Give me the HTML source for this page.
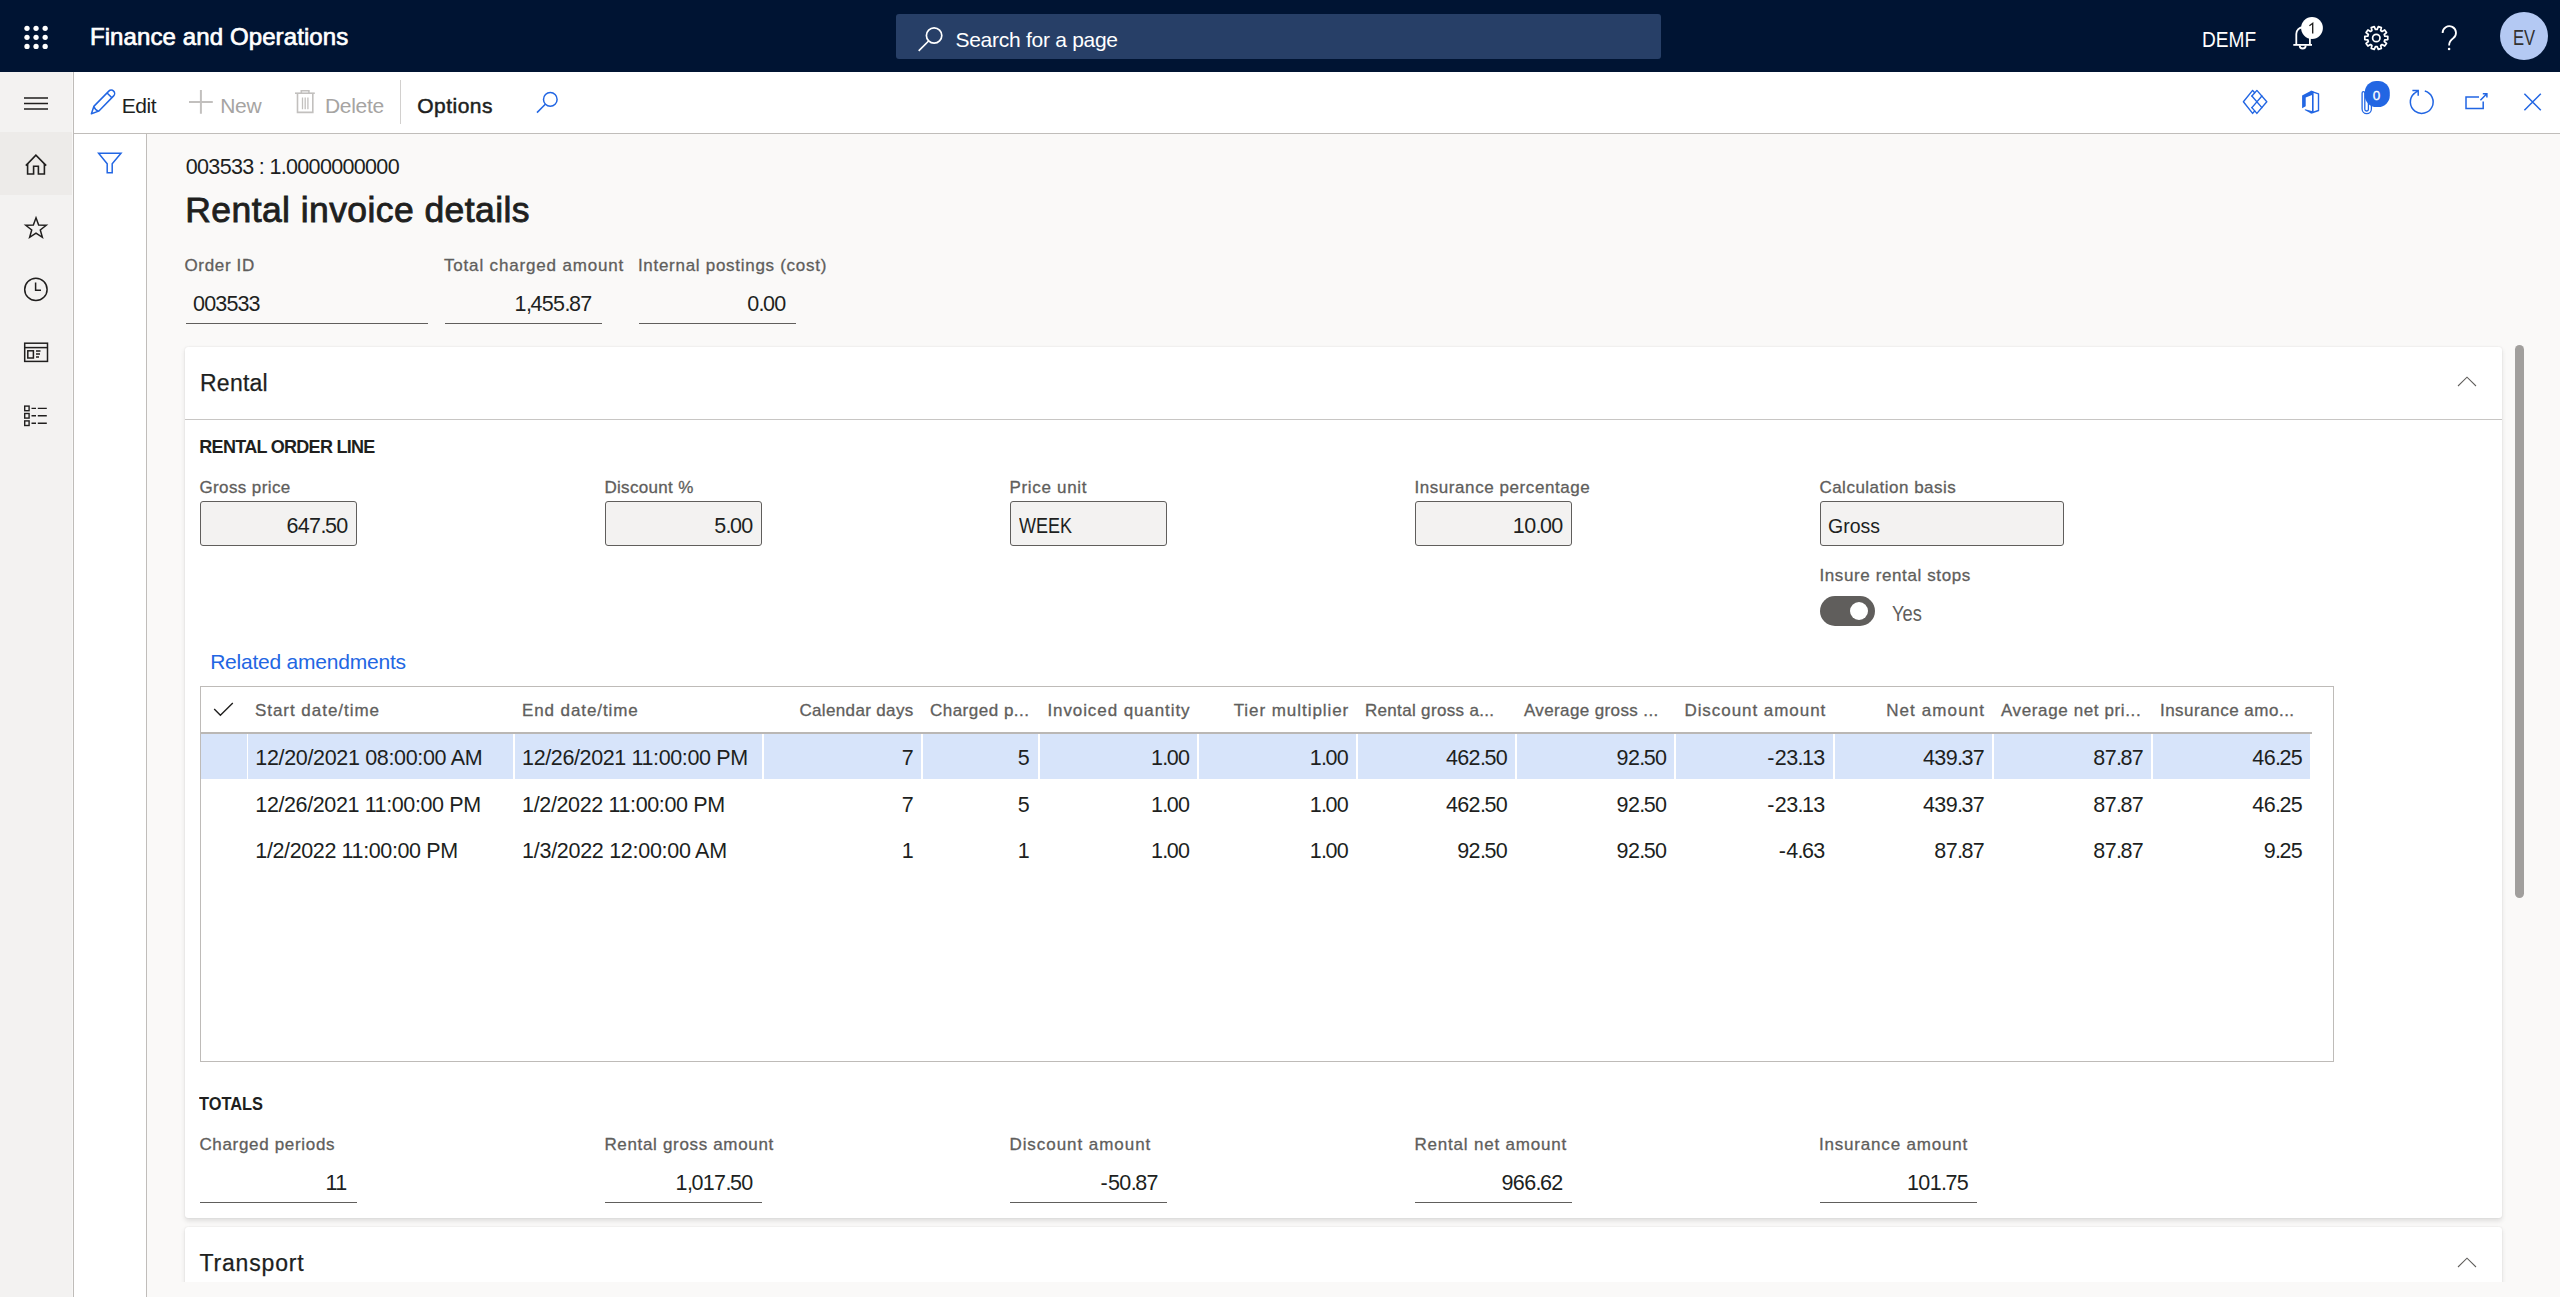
<!DOCTYPE html>
<html lang="en"><head><meta charset="utf-8"><title>Rental invoice details</title>
<style>
*{margin:0;padding:0;box-sizing:border-box}
html,body{width:2560px;height:1297px;overflow:hidden;background:#faf9f8;font-family:"Liberation Sans",sans-serif}
.a{position:absolute}
.t{position:absolute;white-space:pre;line-height:1;font-family:"Liberation Sans",sans-serif}
#hdr{left:0;top:0;width:2560px;height:72px;background:#001433}
#srch{left:896px;top:14px;width:765px;height:45px;background:#273f67;border-radius:3px}
#nav{left:0;top:72px;width:72px;height:1225px;background:#f3f2f1}
#navb{left:72px;top:72px;width:2px;height:1225px;background:linear-gradient(90deg,#f8f7f6 50%,#bfbcb9 50%)}
#navsel{left:0;top:132px;width:72px;height:63px;background:#edebe9}
#tb{left:74px;top:72px;width:2486px;height:61px;background:#fff}
#tbb{left:74px;top:133px;width:2486px;height:1px;background:#c0bdba}
#fp{left:74px;top:134px;width:72px;height:1163px;background:#fff}
#fpb{left:146px;top:134px;width:1px;height:1163px;background:#c0bdba}
#main{left:147px;top:134px;width:2413px;height:1148px;overflow:hidden}
.card{position:absolute;left:38px;width:2317px;background:#fff;border-radius:3px;box-shadow:0 2.5px 5px rgba(0,0,0,.11),0 0 1.5px rgba(0,0,0,.10)}
.ul{position:absolute;height:1px;background:#605e5c}
.inp{position:absolute;top:501px;height:45px;background:#f3f2f1;border:1px solid #605e5c;border-radius:3px}
#grid{left:200px;top:686px;width:2134px;height:376px;border:1px solid #bebbb8}
#ghb{left:201px;top:732px;width:2111px;height:2px;background:#bab7b4}
#sel{left:201px;top:734px;width:2109px;height:45px;background:#d7e4fa}
.sep{position:absolute;top:734px;width:1.4px;height:45px;background:#fff}
#sb{left:2515px;top:345px;width:9px;height:553px;border-radius:4.5px;background:#a19f9d}
svg{position:absolute;left:0;top:0;overflow:visible}

.t i{font-style:normal}

</style></head>
<body>
<div class="a" id="hdr"></div><div class="a" id="srch"></div>
<div class="a" id="nav"></div><div class="a" id="navsel"></div><div class="a" id="navb"></div>
<div class="a" id="tb"></div><div class="a" id="tbb"></div>
<div class="a" id="fp"></div><div class="a" id="fpb"></div>
<div class="a" id="main">
<div class="card" style="top:213px;height:871px"></div>
<div class="card" style="top:1093px;height:200px"></div>
</div>
<div class="a" style="left:185px;top:418.5px;width:2317px;height:1.2px;background:#c8c6c4"></div>
<div class="ul" style="left:185.5px;top:323px;width:242.5px"></div>
<div class="ul" style="left:444.5px;top:323px;width:157.0px"></div>
<div class="ul" style="left:638.5px;top:323px;width:157.0px"></div>
<div class="inp" style="left:200px;width:157px"></div>
<div class="inp" style="left:605px;width:157px"></div>
<div class="inp" style="left:1010px;width:157px"></div>
<div class="inp" style="left:1415px;width:157px"></div>
<div class="inp" style="left:1820px;width:244px"></div>
<div class="a" style="left:1820px;top:596px;width:55px;height:30px;border-radius:15px;background:#605e5c"></div>
<div class="a" style="left:1850px;top:602px;width:18px;height:18px;border-radius:50%;background:#fff"></div>
<div class="a" id="grid"></div><div class="a" id="sel"></div><div class="a" id="ghb"></div>
<div class="sep" style="left:246.9px"></div>
<div class="sep" style="left:513.4px"></div>
<div class="sep" style="left:762.4px"></div>
<div class="sep" style="left:921.4px"></div>
<div class="sep" style="left:1038.4px"></div>
<div class="sep" style="left:1197.4px"></div>
<div class="sep" style="left:1356.4px"></div>
<div class="sep" style="left:1515.4px"></div>
<div class="sep" style="left:1674.4px"></div>
<div class="sep" style="left:1833.4px"></div>
<div class="sep" style="left:1992.4px"></div>
<div class="sep" style="left:2151.4px"></div>
<div class="ul" style="left:200.2px;top:1202px;width:156.6px"></div>
<div class="ul" style="left:605.2px;top:1202px;width:156.6px"></div>
<div class="ul" style="left:1010.2px;top:1202px;width:156.6px"></div>
<div class="ul" style="left:1415.2px;top:1202px;width:156.6px"></div>
<div class="ul" style="left:1820.2px;top:1202px;width:156.6px"></div>
<div class="a" id="sb"></div>
<div class="a" style="left:2500px;top:12px;width:48px;height:48px;border-radius:50%;background:#b4c9f3"></div>
<svg width="2560" height="1297" viewBox="0 0 2560 1297"><circle cx="27" cy="28.35" r="2.65" fill="#ffffff"/><circle cx="27" cy="37.3" r="2.65" fill="#ffffff"/><circle cx="27" cy="46.4" r="2.65" fill="#ffffff"/><circle cx="36.05" cy="28.35" r="2.65" fill="#ffffff"/><circle cx="36.05" cy="37.3" r="2.65" fill="#ffffff"/><circle cx="36.05" cy="46.4" r="2.65" fill="#ffffff"/><circle cx="45.15" cy="28.35" r="2.65" fill="#ffffff"/><circle cx="45.15" cy="37.3" r="2.65" fill="#ffffff"/><circle cx="45.15" cy="46.4" r="2.65" fill="#ffffff"/><g fill="none" stroke="#ffffff" stroke-width="1.7"><circle cx="934.1" cy="35.5" r="7.7"/><path d="M928.6,41 L918.7,50.8"/></g><g fill="none" stroke="#ffffff" stroke-width="1.8"><path d="M2293.3,44.9 H2312"/><path d="M2296.3,44.9 V34 A6.8,6.8 0 0 1 2309.9,34 V44.9"/><path d="M2299.7,45.5 A3,3 0 0 0 2305.7,45.5"/></g><circle cx="2312" cy="28" r="10.9" fill="#ffffff"/><path d="M2309.4,25.7 L2312.7,23.3 V33.4" fill="none" stroke="#201f1e" stroke-width="1.35" stroke-linejoin="miter"/><g fill="none" stroke="#ffffff" stroke-width="1.7" stroke-linejoin="round"><path d="M2377.17,29.34 L2378.33,26.58 L2381.37,27.57 L2380.68,30.48 L2382.09,31.51 L2384.66,29.95 L2386.53,32.54 L2384.26,34.49 L2384.80,36.16 L2387.79,36.40 L2387.79,39.60 L2384.80,39.84 L2384.26,41.51 L2386.53,43.46 L2384.66,46.05 L2382.09,44.49 L2380.68,45.52 L2381.37,48.43 L2378.33,49.42 L2377.17,46.66 L2375.43,46.66 L2374.27,49.42 L2371.23,48.43 L2371.92,45.52 L2370.51,44.49 L2367.94,46.05 L2366.07,43.46 L2368.34,41.51 L2367.80,39.84 L2364.81,39.60 L2364.81,36.40 L2367.80,36.16 L2368.34,34.49 L2366.07,32.54 L2367.94,29.95 L2370.51,31.51 L2371.92,30.48 L2371.23,27.57 L2374.27,26.58 L2375.43,29.34 Z"/><circle cx="2376.3" cy="38" r="3.7"/></g><g fill="none" stroke="#ffffff" stroke-width="1.8"><path d="M2442.6,33 A6.7,6.7 0 1 1 2453.2,38.3 Q2449.1,41.3 2449.1,45.4"/></g><circle cx="2449.1" cy="49" r="1.3" fill="#ffffff"/><g stroke="#201f1e" stroke-width="1.4"><path d="M24,98 H48 M24,103.5 H48 M24,109 H48"/></g><g fill="none" stroke="#201f1e" stroke-width="1.6" stroke-linejoin="miter"><path d="M25.8,165.6 L35.9,155.2 L46.2,165.6"/><path d="M27.6,163.8 V174 H33.6 V166.2 H38.4 V174 H44.4 V163.8"/></g><path d="M36.00,217.80 L38.65,224.96 L46.27,225.26 L40.28,229.99 L42.35,237.34 L36.00,233.10 L29.65,237.34 L31.72,229.99 L25.73,225.26 L33.35,224.96 Z" fill="none" stroke="#201f1e" stroke-width="1.5" stroke-linejoin="miter"/><g fill="none" stroke="#201f1e" stroke-width="1.5"><circle cx="35.9" cy="289.4" r="11.2"/><path d="M35.6,282.5 V290.3 H41"/></g><g fill="none" stroke="#201f1e" stroke-width="1.5"><rect x="24.7" y="343.2" width="22.8" height="18.2"/><path d="M24.7,347.6 H47.5"/><rect x="27.8" y="350.8" width="5.6" height="7.2"/><path d="M36,351 H40.5 M36,354 H40 M36,357 H39"/></g><g fill="none" stroke="#201f1e" stroke-width="1.4"><rect x="24.7" y="406.09999999999997" width="4.4" height="4.6"/><path d="M31.5,408.4 H36 M37.8,408.4 H46.8"/></g><g fill="none" stroke="#201f1e" stroke-width="1.4"><rect x="24.7" y="413.5" width="4.4" height="4.6"/><path d="M31.5,415.8 H36 M37.8,415.8 H46.8"/></g><g fill="none" stroke="#201f1e" stroke-width="1.4"><rect x="24.7" y="420.9" width="4.4" height="4.6"/><path d="M31.5,423.2 H36 M37.8,423.2 H46.8"/></g><path d="M98.6,153.3 H121 L112.2,163.8 V172.8 H107.2 V163.8 Z" fill="none" stroke="#2266e3" stroke-width="1.5" stroke-linejoin="miter"/><g transform="translate(91.4,113.7) rotate(-45.5)" fill="none" stroke="#2266e3" stroke-width="1.5" stroke-linejoin="round"><path d="M0,0 L6.9,-3.4 L28.3,-3.4 A3.4,3.4 0 0 1 28.3,3.4 L6.9,3.4 Z"/><path d="M6.9,-3.4 Q5.2,0 6.9,3.4 M25.8,-3.4 V3.4"/></g><path d="M189,102 H212.8 M200.9,90 V113.8" stroke="#c2c0be" stroke-width="2" fill="none"/><g fill="none" stroke="#c2c0be" stroke-width="1.6"><path d="M295,93.2 H314.8"/><path d="M301.3,93 V90.8 H308.9 V93"/><path d="M297.5,93.2 V112.4 H312.8 V93.2"/><path d="M302.5,97.5 V109.3 M305.2,97.5 V109.3 M307.9,97.5 V109.3" stroke-width="1.3"/></g><path d="M400.5,80 V124" stroke="#d2d0ce" stroke-width="1"/><g fill="none" stroke="#2266e3" stroke-width="1.5"><circle cx="550.3" cy="99.4" r="6.8"/><path d="M545.3,104.2 L537,112.6"/></g><g fill="none" stroke="#2266e3" stroke-width="1.4" stroke-linejoin="round" stroke-linecap="round"><path d="M2254.7,92.8 L2252.6,90.4 L2243.4,101.8 L2252.6,113.4 L2254.7,111"/><path d="M2251.9,96 L2256.9,90.4 L2266.8,101.8 L2256.9,113.4 L2251.9,107.6"/><path d="M2251.9,96 L2261.9,107.6 M2261.9,96 L2251.9,107.6"/></g><path d="M2302.1,95.6 L2310.7,91 L2312.7,91.8 V94.7 L2305.7,97.4 V106.2 L2302.1,108.2 Z" fill="#2266e3"/><path d="M2305.2,109.2 L2312.7,111.2 V112.7 L2310.7,113.2 L2304.6,110 Z" fill="#2266e3"/><path d="M2312.7,91.8 L2318.5,93.8 V110.5 L2312.7,112.5 Z" fill="none" stroke="#2266e3" stroke-width="1.4" stroke-linejoin="round"/><path d="M2310.7,91 L2312.7,91.8 V112.6 L2310.7,113.2" fill="none" stroke="#2266e3" stroke-width="1.3"/><path d="M2371.4,100 V109 A4.65,4.65 0 0 1 2362.1,109 V93 A1.35,1.35 0 0 1 2364.8,93 V109.2 A1.8,1.8 0 0 0 2368.4,109.2 V100" fill="none" stroke="#2266e3" stroke-width="1.3"/><rect x="2364.8" y="81" width="25" height="26" rx="11.5" fill="#2266e3"/><g fill="none" stroke="#2266e3" stroke-width="1.5"><path d="M2414.0,93.6 A11.4,11.4 0 1 0 2424.8,91.0"/><path d="M2413.6,94.0 L2418,90.6 M2412.4,90.5 H2418.2 V95.8"/></g><g fill="none" stroke="#2266e3" stroke-width="1.5"><path d="M2479,97.1 H2466 V108.4 H2483.2 V101.4"/><path d="M2480.4,100.2 L2486.8,93.8 M2482.8,93.7 H2486.9 V97.6"/></g><path d="M2524.4,93.8 L2540.8,110.2 M2540.8,93.8 L2524.4,110.2" stroke="#2266e3" stroke-width="1.5" fill="none"/><path d="M2458,386 L2467,377.2 L2476,386" fill="none" stroke="#605e5c" stroke-width="1.05"/><path d="M2458,1267 L2467,1258.2 L2476,1267" fill="none" stroke="#605e5c" stroke-width="1.05"/><path d="M214.2,709.1 L220.4,715.3 L232.8,703.1" fill="none" stroke="#201f1e" stroke-width="1.4"/></svg>
<span class="t" style="font-size:24px;top:25.00px;color:#ffffff;-webkit-text-stroke:0.7px #ffffff;letter-spacing:0.104px;left:89.92px;">Finance and Operations</span>
<span class="t" style="font-size:21px;top:29.00px;color:#ffffff;letter-spacing:-0.270px;left:955.43px;">Search for a page</span>
<span class="t" style="font-size:21.5px;top:30.00px;color:#ffffff;transform:scaleX(0.8893);transform-origin:0 0;left:2202.26px;">DEMF</span>
<span class="t" style="font-size:21.5px;top:28.00px;color:#323130;transform:scaleX(0.7711);transform-origin:0 0;left:2513.44px;">EV</span>
<span class="t" style="font-size:21px;top:95.00px;color:#201f1e;letter-spacing:-0.449px;left:121.73px;">Edit</span>
<span class="t" style="font-size:21px;top:95.00px;color:#a6a4a2;letter-spacing:-0.288px;left:220.13px;">New</span>
<span class="t" style="font-size:21px;top:95.00px;color:#a6a4a2;letter-spacing:-0.293px;left:324.93px;">Delete</span>
<span class="t" style="font-size:21px;top:95.00px;color:#201f1e;-webkit-text-stroke:0.5px #201f1e;letter-spacing:0.511px;left:417.13px;">Options</span>
<span class="t" style="font-size:13.5px;top:89.00px;color:#ffffff;-webkit-text-stroke:0.3px #ffffff;left:2372.85px;">0</span>
<span class="t" style="font-size:21.5px;top:157.00px;color:#201f1e;letter-spacing:-0.668px;left:185.79px;">003533 : 1.0000000000</span>
<span class="t" style="font-size:35.5px;top:193.00px;color:#201f1e;-webkit-text-stroke:0.85px #201f1e;letter-spacing:0.419px;left:185.31px;">Rental invoice details</span>
<span class="t" style="font-size:17px;top:257.00px;color:#605e5c;-webkit-text-stroke:0.3px #605e5c;letter-spacing:0.670px;left:184.41px;">Order ID</span>
<span class="t" style="font-size:17px;top:257.00px;color:#605e5c;-webkit-text-stroke:0.3px #605e5c;letter-spacing:0.836px;left:443.91px;">Total charged amount</span>
<span class="t" style="font-size:17px;top:257.00px;color:#605e5c;-webkit-text-stroke:0.3px #605e5c;letter-spacing:0.714px;left:637.91px;">Internal postings (cost)</span>
<span class="t" style="font-size:21.5px;top:294.00px;color:#201f1e;letter-spacing:-0.848px;left:193.09px;">003533</span>
<span class="t" style="font-size:21.5px;top:294.00px;color:#201f1e;letter-spacing:-0.630px;right:1968.33px;">1<i style="letter-spacing:-1.42px">,</i>455<i style="letter-spacing:-1.42px">.</i>87</span>
<span class="t" style="font-size:21.5px;top:294.00px;color:#201f1e;letter-spacing:-0.630px;right:1774.33px;">0<i style="letter-spacing:-1.42px">.</i>00</span>
<span class="t" style="font-size:23px;top:372.00px;color:#201f1e;-webkit-text-stroke:0.25px #201f1e;letter-spacing:0.247px;left:199.99px;">Rental</span>
<span class="t" style="font-size:18px;top:438.00px;color:#201f1e;font-weight:700;letter-spacing:-0.708px;left:199.34px;">RENTAL ORDER LINE</span>
<span class="t" style="font-size:17px;top:479.00px;color:#605e5c;-webkit-text-stroke:0.3px #605e5c;letter-spacing:0.396px;left:199.41px;">Gross price</span>
<span class="t" style="font-size:17px;top:479.00px;color:#605e5c;-webkit-text-stroke:0.3px #605e5c;letter-spacing:0.322px;left:604.41px;">Discount %</span>
<span class="t" style="font-size:17px;top:479.00px;color:#605e5c;-webkit-text-stroke:0.3px #605e5c;letter-spacing:0.695px;left:1009.41px;">Price unit</span>
<span class="t" style="font-size:17px;top:479.00px;color:#605e5c;-webkit-text-stroke:0.3px #605e5c;letter-spacing:0.575px;left:1414.41px;">Insurance percentage</span>
<span class="t" style="font-size:17px;top:479.00px;color:#605e5c;-webkit-text-stroke:0.3px #605e5c;letter-spacing:0.492px;left:1819.41px;">Calculation basis</span>
<span class="t" style="font-size:21.5px;top:516.00px;color:#201f1e;letter-spacing:-0.630px;right:2212.33px;">647<i style="letter-spacing:-1.42px">.</i>50</span>
<span class="t" style="font-size:21.5px;top:516.00px;color:#201f1e;letter-spacing:-0.630px;right:1807.33px;">5<i style="letter-spacing:-1.42px">.</i>00</span>
<span class="t" style="font-size:21.5px;top:516.00px;color:#201f1e;transform:scaleX(0.8372);transform-origin:0 0;left:1018.59px;">WEEK</span>
<span class="t" style="font-size:21.5px;top:516.00px;color:#201f1e;letter-spacing:-0.630px;right:997.32px;">10<i style="letter-spacing:-1.42px">.</i>00</span>
<span class="t" style="font-size:21px;top:515.00px;color:#201f1e;transform:scaleX(0.9279);transform-origin:0 0;left:1828.49px;">Gross</span>
<span class="t" style="font-size:17px;top:567.00px;color:#605e5c;-webkit-text-stroke:0.3px #605e5c;letter-spacing:0.612px;left:1819.41px;">Insure rental stops</span>
<span class="t" style="font-size:21.5px;top:604.00px;color:#605e5c;transform:scaleX(0.8498);transform-origin:0 0;left:1891.82px;">Yes</span>
<span class="t" style="font-size:21px;top:651.00px;color:#2266e3;letter-spacing:-0.217px;left:210.13px;">Related amendments</span>
<span class="t" style="font-size:17px;top:702.00px;color:#605e5c;-webkit-text-stroke:0.3px #605e5c;letter-spacing:0.969px;left:254.91px;">Start date/time</span>
<span class="t" style="font-size:17px;top:702.00px;color:#605e5c;-webkit-text-stroke:0.3px #605e5c;letter-spacing:0.914px;left:521.91px;">End date/time</span>
<span class="t" style="font-size:17px;top:702.00px;color:#605e5c;-webkit-text-stroke:0.3px #605e5c;letter-spacing:0.355px;left:799.41px;">Calendar days</span>
<span class="t" style="font-size:17px;top:702.00px;color:#605e5c;-webkit-text-stroke:0.3px #605e5c;letter-spacing:0.506px;left:929.91px;">Charged p...</span>
<span class="t" style="font-size:17px;top:702.00px;color:#605e5c;-webkit-text-stroke:0.3px #605e5c;letter-spacing:0.909px;left:1047.41px;">Invoiced quantity</span>
<span class="t" style="font-size:17px;top:702.00px;color:#605e5c;-webkit-text-stroke:0.3px #605e5c;letter-spacing:0.946px;left:1233.66px;">Tier multiplier</span>
<span class="t" style="font-size:17px;top:702.00px;color:#605e5c;-webkit-text-stroke:0.3px #605e5c;letter-spacing:0.334px;left:1364.91px;">Rental gross a...</span>
<span class="t" style="font-size:17px;top:702.00px;color:#605e5c;-webkit-text-stroke:0.3px #605e5c;letter-spacing:0.386px;left:1523.91px;">Average gross ...</span>
<span class="t" style="font-size:17px;top:702.00px;color:#605e5c;-webkit-text-stroke:0.3px #605e5c;letter-spacing:0.950px;left:1684.41px;">Discount amount</span>
<span class="t" style="font-size:17px;top:702.00px;color:#605e5c;-webkit-text-stroke:0.3px #605e5c;letter-spacing:1.110px;left:1886.16px;">Net amount</span>
<span class="t" style="font-size:17px;top:702.00px;color:#605e5c;-webkit-text-stroke:0.3px #605e5c;letter-spacing:0.625px;left:2000.91px;">Average net pri...</span>
<span class="t" style="font-size:17px;top:702.00px;color:#605e5c;-webkit-text-stroke:0.3px #605e5c;letter-spacing:0.504px;left:2159.91px;">Insurance amo...</span>
<span class="t" style="font-size:21.5px;top:748.00px;color:#201f1e;letter-spacing:-0.336px;left:255.34px;">12/20/2021 08:00:00 AM</span>
<span class="t" style="font-size:21.5px;top:748.00px;color:#201f1e;letter-spacing:-0.376px;left:522.10px;">12/26/2021 11:00:00 PM</span>
<span class="t" style="font-size:21.5px;top:748.00px;color:#201f1e;letter-spacing:-0.630px;right:1646.83px;">7</span>
<span class="t" style="font-size:21.5px;top:748.00px;color:#201f1e;letter-spacing:-0.630px;right:1530.83px;">5</span>
<span class="t" style="font-size:21.5px;top:748.00px;color:#201f1e;letter-spacing:-0.630px;right:1370.58px;">1<i style="letter-spacing:-1.42px">.</i>00</span>
<span class="t" style="font-size:21.5px;top:748.00px;color:#201f1e;letter-spacing:-0.630px;right:1211.83px;">1<i style="letter-spacing:-1.42px">.</i>00</span>
<span class="t" style="font-size:21.5px;top:748.00px;color:#201f1e;letter-spacing:-0.630px;right:1052.83px;">462<i style="letter-spacing:-1.42px">.</i>50</span>
<span class="t" style="font-size:21.5px;top:748.00px;color:#201f1e;letter-spacing:-0.630px;right:893.57px;">92<i style="letter-spacing:-1.42px">.</i>50</span>
<span class="t" style="font-size:21.5px;top:748.00px;color:#201f1e;letter-spacing:-0.630px;right:735.32px;"><i style="letter-spacing:0.3px">-</i>23<i style="letter-spacing:-1.42px">.</i>13</span>
<span class="t" style="font-size:21.5px;top:748.00px;color:#201f1e;letter-spacing:-0.630px;right:575.82px;">439<i style="letter-spacing:-1.42px">.</i>37</span>
<span class="t" style="font-size:21.5px;top:748.00px;color:#201f1e;letter-spacing:-0.630px;right:416.82px;">87<i style="letter-spacing:-1.42px">.</i>87</span>
<span class="t" style="font-size:21.5px;top:748.00px;color:#201f1e;letter-spacing:-0.630px;right:257.82px;">46<i style="letter-spacing:-1.42px">.</i>25</span>
<span class="t" style="font-size:21.5px;top:795.00px;color:#201f1e;letter-spacing:-0.388px;left:255.34px;">12/26/2021 11:00:00 PM</span>
<span class="t" style="font-size:21.5px;top:795.00px;color:#201f1e;letter-spacing:-0.367px;left:522.10px;">1/2/2022 11:00:00 PM</span>
<span class="t" style="font-size:21.5px;top:795.00px;color:#201f1e;letter-spacing:-0.630px;right:1646.83px;">7</span>
<span class="t" style="font-size:21.5px;top:795.00px;color:#201f1e;letter-spacing:-0.630px;right:1530.83px;">5</span>
<span class="t" style="font-size:21.5px;top:795.00px;color:#201f1e;letter-spacing:-0.630px;right:1370.58px;">1<i style="letter-spacing:-1.42px">.</i>00</span>
<span class="t" style="font-size:21.5px;top:795.00px;color:#201f1e;letter-spacing:-0.630px;right:1211.83px;">1<i style="letter-spacing:-1.42px">.</i>00</span>
<span class="t" style="font-size:21.5px;top:795.00px;color:#201f1e;letter-spacing:-0.630px;right:1052.83px;">462<i style="letter-spacing:-1.42px">.</i>50</span>
<span class="t" style="font-size:21.5px;top:795.00px;color:#201f1e;letter-spacing:-0.630px;right:893.57px;">92<i style="letter-spacing:-1.42px">.</i>50</span>
<span class="t" style="font-size:21.5px;top:795.00px;color:#201f1e;letter-spacing:-0.630px;right:735.32px;"><i style="letter-spacing:0.3px">-</i>23<i style="letter-spacing:-1.42px">.</i>13</span>
<span class="t" style="font-size:21.5px;top:795.00px;color:#201f1e;letter-spacing:-0.630px;right:575.82px;">439<i style="letter-spacing:-1.42px">.</i>37</span>
<span class="t" style="font-size:21.5px;top:795.00px;color:#201f1e;letter-spacing:-0.630px;right:416.82px;">87<i style="letter-spacing:-1.42px">.</i>87</span>
<span class="t" style="font-size:21.5px;top:795.00px;color:#201f1e;letter-spacing:-0.630px;right:257.82px;">46<i style="letter-spacing:-1.42px">.</i>25</span>
<span class="t" style="font-size:21.5px;top:841.00px;color:#201f1e;letter-spacing:-0.380px;left:255.34px;">1/2/2022 11:00:00 PM</span>
<span class="t" style="font-size:21.5px;top:841.00px;color:#201f1e;letter-spacing:-0.284px;left:522.10px;">1/3/2022 12:00:00 AM</span>
<span class="t" style="font-size:21.5px;top:841.00px;color:#201f1e;letter-spacing:-0.630px;right:1646.83px;">1</span>
<span class="t" style="font-size:21.5px;top:841.00px;color:#201f1e;letter-spacing:-0.630px;right:1530.83px;">1</span>
<span class="t" style="font-size:21.5px;top:841.00px;color:#201f1e;letter-spacing:-0.630px;right:1370.58px;">1<i style="letter-spacing:-1.42px">.</i>00</span>
<span class="t" style="font-size:21.5px;top:841.00px;color:#201f1e;letter-spacing:-0.630px;right:1211.83px;">1<i style="letter-spacing:-1.42px">.</i>00</span>
<span class="t" style="font-size:21.5px;top:841.00px;color:#201f1e;letter-spacing:-0.630px;right:1052.83px;">92<i style="letter-spacing:-1.42px">.</i>50</span>
<span class="t" style="font-size:21.5px;top:841.00px;color:#201f1e;letter-spacing:-0.630px;right:893.57px;">92<i style="letter-spacing:-1.42px">.</i>50</span>
<span class="t" style="font-size:21.5px;top:841.00px;color:#201f1e;letter-spacing:-0.630px;right:735.32px;"><i style="letter-spacing:0.3px">-</i>4<i style="letter-spacing:-1.42px">.</i>63</span>
<span class="t" style="font-size:21.5px;top:841.00px;color:#201f1e;letter-spacing:-0.630px;right:575.82px;">87<i style="letter-spacing:-1.42px">.</i>87</span>
<span class="t" style="font-size:21.5px;top:841.00px;color:#201f1e;letter-spacing:-0.630px;right:416.82px;">87<i style="letter-spacing:-1.42px">.</i>87</span>
<span class="t" style="font-size:21.5px;top:841.00px;color:#201f1e;letter-spacing:-0.630px;right:257.82px;">9<i style="letter-spacing:-1.42px">.</i>25</span>
<span class="t" style="font-size:18px;top:1095.00px;color:#201f1e;font-weight:700;transform:scaleX(0.9104);transform-origin:0 0;left:199.45px;">TOTALS</span>
<span class="t" style="font-size:17px;top:1136.00px;color:#605e5c;-webkit-text-stroke:0.3px #605e5c;letter-spacing:0.673px;left:199.41px;">Charged periods</span>
<span class="t" style="font-size:17px;top:1136.00px;color:#605e5c;-webkit-text-stroke:0.3px #605e5c;letter-spacing:0.667px;left:604.41px;">Rental gross amount</span>
<span class="t" style="font-size:17px;top:1136.00px;color:#605e5c;-webkit-text-stroke:0.3px #605e5c;letter-spacing:0.950px;left:1009.41px;">Discount amount</span>
<span class="t" style="font-size:17px;top:1136.00px;color:#605e5c;-webkit-text-stroke:0.3px #605e5c;letter-spacing:0.810px;left:1414.41px;">Rental net amount</span>
<span class="t" style="font-size:17px;top:1136.00px;color:#605e5c;-webkit-text-stroke:0.3px #605e5c;letter-spacing:0.819px;left:1818.91px;">Insurance amount</span>
<span class="t" style="font-size:21.5px;top:1173.00px;color:#201f1e;letter-spacing:-0.630px;right:2213.33px;">11</span>
<span class="t" style="font-size:21.5px;top:1173.00px;color:#201f1e;letter-spacing:-0.630px;right:1807.33px;">1<i style="letter-spacing:-1.42px">,</i>017<i style="letter-spacing:-1.42px">.</i>50</span>
<span class="t" style="font-size:21.5px;top:1173.00px;color:#201f1e;letter-spacing:-0.630px;right:1402.12px;"><i style="letter-spacing:0.3px">-</i>50<i style="letter-spacing:-1.42px">.</i>87</span>
<span class="t" style="font-size:21.5px;top:1173.00px;color:#201f1e;letter-spacing:-0.630px;right:997.32px;">966<i style="letter-spacing:-1.42px">.</i>62</span>
<span class="t" style="font-size:21.5px;top:1173.00px;color:#201f1e;letter-spacing:-0.630px;right:591.82px;">101<i style="letter-spacing:-1.42px">.</i>75</span>
<span class="t" style="font-size:23px;top:1252.00px;color:#201f1e;-webkit-text-stroke:0.25px #201f1e;letter-spacing:0.830px;left:199.49px;">Transport</span>
</body></html>
